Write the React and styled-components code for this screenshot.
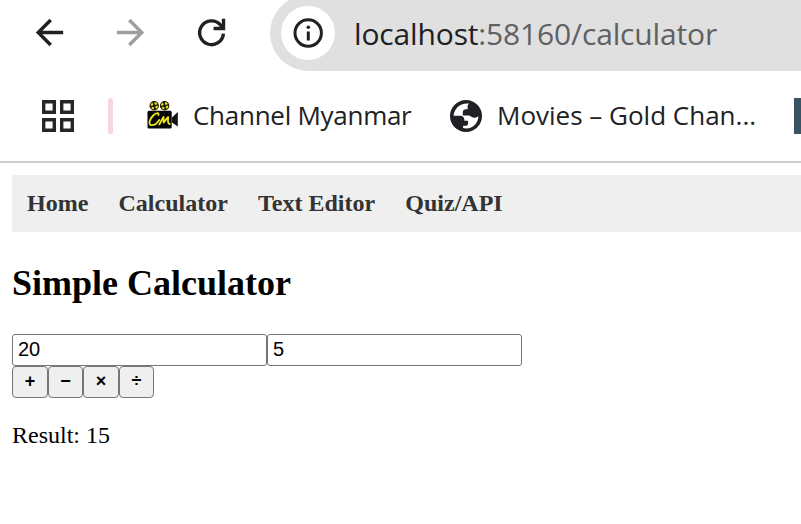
import React, { useState } from "react";
import styled, { createGlobalStyle } from "styled-components";

const GlobalStyle = createGlobalStyle`
  html, body { margin: 0; background: #fff; overflow: hidden; }
  * { box-sizing: border-box; }
  svg { display: block; flex: none; }
`;

const Window = styled.div`
  width: 100%;
  height: 524px;
  overflow: hidden;
  color: #000;
  font-family: "Liberation Serif", "Times New Roman", serif;
`;

const Toolbar = styled.header`
  display: flex;
  height: 80px;
  padding-left: 29px;
  overflow: hidden;
`;

const NavButton = styled.span`
  width: 41px;
  height: 41px;
  margin: 12px 40px 0 0;
  color: ${(p) => (p.$muted ? "#9e9e9e" : "#202124")};
`;

const AddressBar = styled.div`
  display: flex;
  align-items: center;
  flex: 1;
  height: 76px;
  margin: -5px 0 0 -2px;
  padding-left: 11px;
  background: #e0e0e0;
  border-radius: 38px 0 0 38px;
`;

const InfoBadge = styled.span`
  display: grid;
  place-items: center;
  width: 54px;
  height: 54px;
  border-radius: 50%;
  background: #fff;
  color: #202124;
`;

const Url = styled.span`
  margin: 2px 0 0 19px;
  font: 30px/40px "Open Sans", sans-serif;
  letter-spacing: -0.15px;
  white-space: nowrap;
  color: #5f6061;
`;

const Host = styled.span`
  color: #202124;
`;

const Bookmarks = styled.div`
  display: flex;
  align-items: center;
  height: 83px;
  padding: 0 0 9px 41px;
  border-bottom: 2px solid #cdcdcd;
  overflow: hidden;
`;

const GroupBar = styled.span`
  flex: none;
  width: 5px;
  height: 36px;
  margin: 0 34px;
  border-radius: 3px;
  background: #f6d6e4;
`;

const Bookmark = styled.a`
  display: flex;
  flex: none;
  align-items: center;
  width: ${(p) => p.$width}px;
`;

const BookmarkLabel = styled.span`
  margin: 0 0 2px 15px;
  font: 26px/34px "Open Sans", sans-serif;
  letter-spacing: ${(p) => p.$tracking}px;
  white-space: nowrap;
  color: #202124;
`;

const ClippedFavicon = styled.span`
  flex: none;
  width: 36px;
  height: 36px;
  background: #3b5360;
`;

const Page = styled.main`
  padding: 12px 0 0 12px;
`;

const SiteNav = styled.nav`
  display: flex;
  gap: 30.2px;
  height: 57px;
  padding: 15px;
  background: #efefef;
`;

const SiteLink = styled.a`
  font-size: 24px;
  line-height: 27px;
  font-weight: bold;
  color: #333;
  white-space: nowrap;
`;

const Title = styled.h2`
  margin: 30px 0;
  font-size: 36px;
  line-height: 42px;
`;

const Row = styled.div`
  display: flex;
`;

const NumberInput = styled.input`
  width: 255px;
  height: 32px;
  padding: 1px 5px 3px;
  border: 1px solid #767676;
  border-radius: 3px;
  outline: none;
  background: #fff;
  color: #000;
  font: 20px "Liberation Sans", Arial, sans-serif;
`;

const OpButton = styled.button`
  width: ${(p) => p.$width}px;
  height: 32px;
  padding: 0 0 1px;
  border: 1px solid #767676;
  border-radius: 4px;
  background: #efefef;
  color: #000;
  font: bold 18px "Liberation Sans", Arial, sans-serif;
`;

const Result = styled.p`
  margin: 24px 0;
  font-size: 24px;
  line-height: 27px;
`;

const ArrowIcon = ({ d }) => (
  <svg width="41" height="41" viewBox="0 0 24 24">
    <path fill="currentColor" d={d} />
  </svg>
);

const ReloadIcon = () => (
  <svg width="41" height="41" viewBox="0 0 41 41" fill="none" stroke="currentColor" strokeWidth="3.4">
    <path d="M32.4 21.6A11.9 11.9 0 1 1 29.4 12.8L32.4 16" />
    <path d="M32.5 6.8V16.5H22.6" />
  </svg>
);

const InfoIcon = () => (
  <svg width="30" height="30" viewBox="0 0 30 30">
    <circle cx="15.2" cy="15" r="13.2" fill="none" stroke="currentColor" strokeWidth="3" />
    <rect x="13.8" y="13.5" width="3" height="9" fill="currentColor" />
    <circle cx="15.3" cy="9.3" r="1.8" fill="currentColor" />
  </svg>
);

const AppsIcon = () => (
  <svg width="33" height="32" viewBox="0 0 33 32" fill="none" stroke="#25282b" strokeWidth="3.4">
    <path d="M2.7 1.7h10.6v10.6H2.7zM20.7 1.7h10.6v10.6H20.7zM2.7 19.7h10.6v10.6H2.7zM20.7 19.7h10.6v10.6H20.7z" />
  </svg>
);

const Reel = ({ cx }) => (
  <g>
    <circle cx={cx} cy="4.8" r="4.7" fill="#161600" />
    <circle cx={cx} cy="4.8" r="2.7" fill="none" stroke="#e9dd18" strokeWidth="2.2" strokeDasharray="2.5 1.74" />
  </g>
);

const CameraIcon = () => (
  <svg width="31" height="30" viewBox="0 0 31 30">
    <Reel cx={7.2} />
    <Reel cx={17.6} />
    <rect x="0.5" y="9.8" width="24.2" height="17.8" rx="1.5" fill="#050505" />
    <path d="M25 16.5L30.8 11V25.5L25 21.5Z" fill="#111" />
    <path
      d="M11.3 14C12.4 11.7 9.5 11.2 6.2 14.5C2.5 18.2 1.1 23.6 4.2 24.1C7 24.5 10.2 22.1 12.2 18.9M12.4 23.4C14.4 19.8 15.3 17 16.6 15.9C16.7 18 16.1 20.7 16.7 21.5C17.7 20.4 19.8 17 21.3 16.1C21.1 18.3 20.1 22.8 22.8 23"
      fill="none"
      stroke="#eee51c"
      strokeWidth="1.8"
      strokeLinecap="round"
      strokeLinejoin="round"
    />
  </svg>
);

const GlobeIcon = () => (
  <svg width="32" height="32" viewBox="0 0 32 32">
    <circle cx="16" cy="16" r="16" fill="#202124" />
    <path
      fill="#fff"
      d="M19.2 3.7C11 2.4 4 8.4 3.6 15.8H9.5C13 15.8 14.4 17.5 14.4 20.7H18V23.7C18 25.5 16.8 25.8 13.1 25.8V28.1C21.5 30.2 28.6 23.6 28.4 15.8C27 17.8 25.2 18 23 17.4C20.8 16.8 20.5 15.4 18.6 15.4H12.8V12.8C12.8 10.4 13.6 9.2 16.1 9.2H17.6V6.7C17.6 5.3 18 4.3 19.2 3.7Z"
    />
  </svg>
);

const operations = [
  { symbol: "+", width: 36, apply: (a, b) => a + b },
  { symbol: "−", width: 35, apply: (a, b) => a - b },
  { symbol: "×", width: 36, apply: (a, b) => a * b },
  { symbol: "÷", width: 35, apply: (a, b) => a / b },
];

export default function App() {
  const [first, setFirst] = useState("20");
  const [second, setSecond] = useState("5");
  const [result, setResult] = useState(15);

  return (
    <Window>
      <GlobalStyle />
      <Toolbar>
        <NavButton>
          <ArrowIcon d="M20 11H7.83l5.59-5.59L12 4l-8 8 8 8 1.41-1.41L7.83 13H20z" />
        </NavButton>
        <NavButton $muted>
          <ArrowIcon d="M4 11h12.17l-5.59-5.59L12 4l8 8-8 8-1.41-1.41L16.17 13H4z" />
        </NavButton>
        <NavButton>
          <ReloadIcon />
        </NavButton>
        <AddressBar>
          <InfoBadge>
            <InfoIcon />
          </InfoBadge>
          <Url>
            <Host>localhost</Host>:58160/calculator
          </Url>
        </AddressBar>
      </Toolbar>
      <Bookmarks>
        <AppsIcon />
        <GroupBar />
        <Bookmark $width={303}>
          <CameraIcon />
          <BookmarkLabel $tracking={-0.27}>Channel Myanmar</BookmarkLabel>
        </Bookmark>
        <Bookmark $width={344}>
          <GlobeIcon />
          <BookmarkLabel $tracking={0}>Movies – Gold Chan...</BookmarkLabel>
        </Bookmark>
        <ClippedFavicon />
      </Bookmarks>
      <Page>
        <SiteNav>
          {["Home", "Calculator", "Text Editor", "Quiz/API"].map((name) => (
            <SiteLink key={name}>{name}</SiteLink>
          ))}
        </SiteNav>
        <Title>Simple Calculator</Title>
        <Row>
          <NumberInput value={first} onChange={(e) => setFirst(e.target.value)} />
          <NumberInput value={second} onChange={(e) => setSecond(e.target.value)} />
        </Row>
        <Row>
          {operations.map(({ symbol, width, apply }) => (
            <OpButton key={symbol} $width={width} onClick={() => setResult(apply(Number(first), Number(second)))}>
              {symbol}
            </OpButton>
          ))}
        </Row>
        <Result>Result: {result}</Result>
      </Page>
    </Window>
  );
}
